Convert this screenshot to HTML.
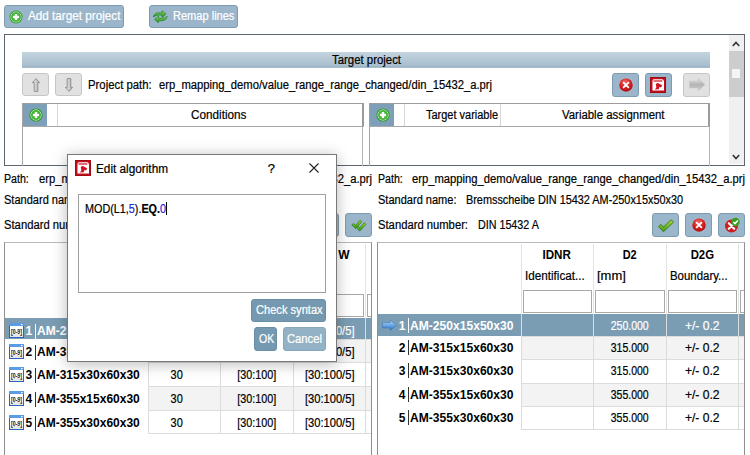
<!DOCTYPE html>
<html><head><meta charset="utf-8"><style>
*{margin:0;padding:0;box-sizing:border-box}
html,body{width:750px;height:455px;overflow:hidden;background:#fff}
body{position:relative;font-family:"Liberation Sans",sans-serif;font-size:12px;color:#000}
.a{position:absolute}
.t{position:absolute;white-space:nowrap;-webkit-text-stroke:0.2px currentColor}
.btn{position:absolute;background:#9db7ca;border:1px solid #7d9bb1;border-radius:3px}
.gbtn{position:absolute;background:#e1e1e1;border:1px solid #c6c6c6;border-radius:3px}
</style></head><body>
<div class="btn" style="left:4px;top:5px;width:120px;height:23px;background:#9bb6ca;border-color:#7d9bb1"></div>
<svg class="a" style="left:7.5px;top:8.5px" width="16" height="16" viewBox="0 0 16 16"><circle cx="8" cy="8" r="6.5" fill="#2e9a2e"/><circle cx="8" cy="8" r="5.1" fill="none" stroke="#b6e8a8" stroke-width="1"/><circle cx="8" cy="8" r="4.6" fill="#46b43a"/><rect x="6.8" y="4.9" width="2.4" height="6.2" fill="#fff"/><rect x="4.9" y="6.8" width="6.2" height="2.4" fill="#fff"/></svg>
<div class="t" style="font-size:12px;line-height:13px;color:#fff;left:27.50px;top:10.34px;transform:scaleX(0.9764);transform-origin:0 0;">Add target project</div>
<div class="btn" style="left:149px;top:5px;width:89px;height:23px;background:#9bb6ca;border-color:#7d9bb1"></div>
<svg class="a" style="left:152px;top:10px" width="16" height="13" viewBox="0 0 16 13"><defs><linearGradient id="rf" x1="0" y1="0" x2="0" y2="1"><stop offset="0" stop-color="#9adc78"/><stop offset="0.55" stop-color="#4cb13a"/><stop offset="1" stop-color="#23801c"/></linearGradient></defs><path d="M1.3 7 C2 3 5.5 2.3 10 2.8 L10 0.6 L14 4 L10 7.4 L10 5.2 C6.5 4.8 4 5.2 1.3 7 Z" fill="url(#rf)" stroke="#1f7a1f" stroke-width="0.6"/><path d="M15.2 6.4 C14.5 10.4 11 11.2 6.5 10.6 L6.5 12.8 L2.5 9.4 L6.5 6 L6.5 8.2 C10 8.6 12.5 8.2 15.2 6.4 Z" fill="url(#rf)" stroke="#1f7a1f" stroke-width="0.6"/></svg>
<div class="t" style="font-size:12px;line-height:13px;color:#fff;left:172.50px;top:10.34px;transform:scaleX(0.9205);transform-origin:0 0;">Remap lines</div>
<div class="a" style="left:4px;top:34px;width:741px;height:132px;border:1px solid #5c6670"></div>
<div class="a" style="left:22px;top:52px;width:688px;height:16px;background:linear-gradient(#c3d4de,#a8becd 88%,#8fa9bb 94%,#c0d0da)"></div>
<div class="t" style="font-size:12px;line-height:13px;left:331.70px;top:54.34px;transform:scaleX(0.9491);transform-origin:0 0;">Target project</div>
<div class="gbtn" style="left:22px;top:73px;width:27px;height:23px"></div>
<div class="gbtn" style="left:55px;top:73px;width:27px;height:23px"></div>
<svg class="a" style="left:32px;top:78px" width="8" height="14" viewBox="0 0 8 14"><defs><linearGradient id="ua" x1="0" y1="0" x2="1" y2="0"><stop offset="0" stop-color="#f2f2f2"/><stop offset="1" stop-color="#a8a8a8"/></linearGradient></defs><path d="M4 0.6 L7.6 4.6 H5.8 V13.4 H2.2 V4.6 H0.4 Z" fill="url(#ua)" stroke="#8a8a8a" stroke-width="0.9" stroke-linejoin="round"/></svg>
<svg class="a" style="left:65px;top:78px" width="8" height="14" viewBox="0 0 8 14"><defs><linearGradient id="da" x1="0" y1="0" x2="1" y2="0"><stop offset="0" stop-color="#f2f2f2"/><stop offset="1" stop-color="#a8a8a8"/></linearGradient></defs><path d="M4 13.4 L7.6 9.4 H5.8 V0.6 H2.2 V9.4 H0.4 Z" fill="url(#da)" stroke="#8a8a8a" stroke-width="0.9" stroke-linejoin="round"/></svg>
<div class="t" style="font-size:12px;line-height:13px;left:88.20px;top:79.34px;transform:scaleX(0.9455);transform-origin:0 0;">Project path:</div>
<div class="t" style="font-size:12px;line-height:13px;left:158.60px;top:79.34px;transform:scaleX(0.9364);transform-origin:0 0;">erp_mapping_demo/value_range_range_changed/din_15432_a.prj</div>
<div class="btn" style="left:612px;top:73px;width:27px;height:24px;background:#9bb6ca;border-color:#7d9bb1"></div>
<svg class="a" style="left:617.5px;top:76.5px" width="16" height="16" viewBox="0 0 16 16"><defs><radialGradient id="rg" cx="0.45" cy="0.3" r="0.75"><stop offset="0" stop-color="#f36a6a"/><stop offset="0.55" stop-color="#d42020"/><stop offset="1" stop-color="#a50d0d"/></radialGradient></defs><circle cx="8" cy="8" r="7.3999999999999995" fill="#9fd8ee" opacity="0.7"/><circle cx="8" cy="8" r="6.8" fill="url(#rg)"/><path d="M5.6 5.6 L10.4 10.4 M10.4 5.6 L5.6 10.4" stroke="#fff" stroke-width="1.8" stroke-linecap="round"/></svg>
<div class="btn" style="left:645px;top:73px;width:27px;height:24px;background:#9bb6ca;border-color:#7d9bb1"></div>
<svg class="a" style="left:650px;top:77px" width="16" height="16" viewBox="0 0 16 16"><rect x="0" y="0" width="16" height="16" fill="#c40f1c"/><rect x="0.5" y="0.5" width="15" height="15" fill="none" stroke="#a00812" stroke-width="1"/><path d="M4 2.3 H12.5 L14 3.8 V13.6 H2.5 V3.8 Q2.5 2.3 4 2.3 Z" fill="#fff"/><rect x="3.5" y="3.4" width="8.8" height="1.2" fill="#d01020"/><path d="M5.8 7.2 Q7.5 5.2 9.2 6.8 L12.2 8.2 L11 10.6 L9.4 10 L8.8 12.2 L5 12.4 L6.4 10.2 Z" fill="#d01222"/></svg>
<div class="gbtn" style="left:683px;top:73px;width:27px;height:24px"></div>
<svg class="a" style="left:689px;top:78px" width="17" height="14" viewBox="0 0 17 14"><defs><linearGradient id="ga" x1="0" y1="0" x2="0" y2="1"><stop offset="0" stop-color="#e2e2e2"/><stop offset="0.5" stop-color="#b4b4b4"/><stop offset="1" stop-color="#cfcfcf"/></linearGradient></defs><path d="M0.5 3.2 H9.2 V0.3 L16 6.6 L9.2 13 V10 H0.5 Z" fill="url(#ga)" stroke="#c4c4c4" stroke-width="0.5"/></svg>
<div class="a" style="left:22px;top:103px;width:342px;height:1px;background:#9c9c9c"></div>
<div class="a" style="left:22px;top:103px;width:1px;height:63px;background:#a4a4a4"></div>
<div class="a" style="left:362px;top:103px;width:2px;height:24px;background:#9a9a9a"></div>
<div class="a" style="left:362px;top:126px;width:1px;height:40px;background:#b4b4b4"></div>
<div class="a" style="left:22px;top:126px;width:342px;height:1px;background:#a8a8a8"></div>
<div class="a" style="left:23px;top:104px;width:24px;height:22px;background:#7d9fb8"></div>
<svg class="a" style="left:27.799999999999997px;top:107px" width="16" height="16" viewBox="0 0 16 16"><circle cx="8" cy="8" r="6.6" fill="#2e9a2e"/><circle cx="8" cy="8" r="5.199999999999999" fill="none" stroke="#b6e8a8" stroke-width="1"/><circle cx="8" cy="8" r="4.699999999999999" fill="#46b43a"/><rect x="6.8" y="4.9" width="2.4" height="6.2" fill="#fff"/><rect x="4.9" y="6.8" width="6.2" height="2.4" fill="#fff"/></svg>
<div class="a" style="left:57px;top:104px;width:1px;height:22px;background:#d6d6d6"></div>
<div class="t" style="font-size:12px;line-height:13px;left:190.90px;top:108.74px;transform:scaleX(0.9770);transform-origin:0 0;">Conditions</div>
<div class="a" style="left:369px;top:103px;width:341px;height:1px;background:#9c9c9c"></div>
<div class="a" style="left:369px;top:103px;width:1px;height:63px;background:#a4a4a4"></div>
<div class="a" style="left:708px;top:103px;width:2px;height:24px;background:#9a9a9a"></div>
<div class="a" style="left:709px;top:126px;width:1px;height:40px;background:#b4b4b4"></div>
<div class="a" style="left:369px;top:126px;width:341px;height:1px;background:#a8a8a8"></div>
<div class="a" style="left:370px;top:104px;width:24px;height:22px;background:#7d9fb8"></div>
<svg class="a" style="left:374.8px;top:107px" width="16" height="16" viewBox="0 0 16 16"><circle cx="8" cy="8" r="6.6" fill="#2e9a2e"/><circle cx="8" cy="8" r="5.199999999999999" fill="none" stroke="#b6e8a8" stroke-width="1"/><circle cx="8" cy="8" r="4.699999999999999" fill="#46b43a"/><rect x="6.8" y="4.9" width="2.4" height="6.2" fill="#fff"/><rect x="4.9" y="6.8" width="6.2" height="2.4" fill="#fff"/></svg>
<div class="a" style="left:404px;top:104px;width:1px;height:22px;background:#d6d6d6"></div>
<div class="a" style="left:500px;top:104px;width:1px;height:22px;background:#d6d6d6"></div>
<div class="t" style="font-size:12px;line-height:13px;left:426.00px;top:108.74px;transform:scaleX(0.9146);transform-origin:0 0;">Target variable</div>
<div class="t" style="font-size:12px;line-height:13px;left:562.00px;top:108.74px;transform:scaleX(0.9504);transform-origin:0 0;">Variable assignment</div>
<div class="a" style="left:729px;top:35px;width:15px;height:129px;background:#f0f0f0"></div>
<div class="a" style="left:729px;top:51px;width:15px;height:46px;background:#cdcdcd"></div>
<div class="a" style="left:732px;top:69px;width:8px;height:9px;background:#f4f4f4"></div>
<svg class="a" style="left:732px;top:41px" width="8" height="6" viewBox="0 0 8 6"><path d="M0.8 5 L4 1.5 L7.2 5" fill="none" stroke="#333" stroke-width="1.6"/></svg>
<svg class="a" style="left:732px;top:154px" width="8" height="6" viewBox="0 0 8 6"><path d="M0.8 1 L4 4.5 L7.2 1" fill="none" stroke="#333" stroke-width="1.6"/></svg>
<div class="t" style="font-size:12px;line-height:13px;left:4.40px;top:172.94px;transform:scaleX(0.8847);transform-origin:0 0;">Path:</div>
<div class="t" style="font-size:12px;line-height:13px;left:39.00px;top:172.94px;transform:scaleX(0.9364);transform-origin:0 0;">erp_mapping_demo/value_range_range_changed/din_15432_a.prj</div>
<div class="t" style="font-size:12px;line-height:13px;left:4.40px;top:194.34px;transform:scaleX(0.9193);transform-origin:0 0;">Standard name:</div>
<div class="t" style="font-size:12px;line-height:13px;left:4.40px;top:218.84px;transform:scaleX(0.9369);transform-origin:0 0;">Standard number:</div>
<div class="btn" style="left:312px;top:213px;width:27px;height:24px;background:#9bb6ca;border-color:#7d9bb1"></div>
<div class="btn" style="left:345px;top:213px;width:27px;height:24px;background:#9bb6ca;border-color:#7d9bb1"></div>
<svg class="a" style="left:351px;top:218px" width="16" height="14" viewBox="0 0 16 14"><defs><linearGradient id="dk" x1="0" y1="0" x2="0" y2="1"><stop offset="0" stop-color="#a8d436"/><stop offset="1" stop-color="#2f9418"/></linearGradient></defs><path d="M0.8 7 L2.6 5.4 L4.6 7.4 L9 2.2 L10.8 3.8 L4.6 10.6 Z" fill="url(#dk)" stroke="#267a12" stroke-width="0.7"/><path d="M5 9.5 L6.8 7.9 L8.8 9.9 L13.2 4.7 L15 6.3 L8.8 13.1 Z" fill="url(#dk)" stroke="#267a12" stroke-width="0.7"/></svg>
<div class="t" style="font-size:12px;line-height:13px;left:377.60px;top:172.94px;transform:scaleX(0.8847);transform-origin:0 0;">Path:</div>
<div class="t" style="font-size:12px;line-height:13px;left:411.80px;top:172.94px;transform:scaleX(0.9364);transform-origin:0 0;">erp_mapping_demo/value_range_range_changed/din_15432_a.prj</div>
<div class="t" style="font-size:12px;line-height:13px;left:377.60px;top:194.34px;transform:scaleX(0.9193);transform-origin:0 0;">Standard name:</div>
<div class="t" style="font-size:12px;line-height:13px;left:466.00px;top:194.34px;transform:scaleX(0.9062);transform-origin:0 0;">Bremsscheibe DIN 15432 AM-250x15x50x30</div>
<div class="t" style="font-size:12px;line-height:13px;left:377.60px;top:218.84px;transform:scaleX(0.9369);transform-origin:0 0;">Standard number:</div>
<div class="t" style="font-size:12px;line-height:13px;left:477.70px;top:218.84px;transform:scaleX(0.8935);transform-origin:0 0;">DIN 15432 A</div>
<div class="btn" style="left:652px;top:213px;width:27px;height:24px;background:#9bb6ca;border-color:#7d9bb1"></div>
<svg class="a" style="left:658px;top:219px" width="16" height="14" viewBox="0 0 16 14"><defs><linearGradient id="ck" x1="0" y1="0" x2="0" y2="1"><stop offset="0" stop-color="#b6d836"/><stop offset="1" stop-color="#3a9a1a"/></linearGradient></defs><path d="M0.6 7.6 L3 5.4 L5.4 8 L13.2 0.8 L15.4 3.2 L5.4 12.8 Z" fill="url(#ck)" stroke="#2a7a12" stroke-width="0.9" stroke-linejoin="round"/></svg>
<div class="btn" style="left:685px;top:213px;width:27px;height:24px;background:#9bb6ca;border-color:#7d9bb1"></div>
<svg class="a" style="left:690.5px;top:217px" width="16" height="16" viewBox="0 0 16 16"><defs><radialGradient id="rg" cx="0.45" cy="0.3" r="0.75"><stop offset="0" stop-color="#f36a6a"/><stop offset="0.55" stop-color="#d42020"/><stop offset="1" stop-color="#a50d0d"/></radialGradient></defs><circle cx="8" cy="8" r="7.3999999999999995" fill="#9fd8ee" opacity="0.7"/><circle cx="8" cy="8" r="6.8" fill="url(#rg)"/><path d="M5.6 5.6 L10.4 10.4 M10.4 5.6 L5.6 10.4" stroke="#fff" stroke-width="1.8" stroke-linecap="round"/></svg>
<div class="btn" style="left:718px;top:213px;width:27px;height:24px;background:#9bb6ca;border-color:#7d9bb1"></div>
<svg class="a" style="left:724px;top:216.5px" width="16" height="16" viewBox="0 0 16 16"><circle cx="7.5" cy="9" r="6.5" fill="#cc1f1f"/><path d="M4.8 6.3 L10.2 11.7 M10.2 6.3 L4.8 11.7" stroke="#fff" stroke-width="2.2" stroke-linecap="round"/><circle cx="11.5" cy="5" r="4.2" fill="#3a9e22"/><path d="M9.3 5 L11 6.6 L13.8 3.6" stroke="#fff" stroke-width="1.5" fill="none"/></svg>
<div class="a" style="left:377px;top:242px;width:368px;height:213px;border:1px solid #8f8f8f;border-top-color:#b9b9b9;border-bottom:none"></div>
<div class="a" style="left:521px;top:244px;width:1px;height:70px;background:#e3e3e3"></div>
<div class="a" style="left:593px;top:244px;width:1px;height:70px;background:#e3e3e3"></div>
<div class="a" style="left:666px;top:244px;width:1px;height:70px;background:#e3e3e3"></div>
<div class="a" style="left:738px;top:244px;width:1px;height:70px;background:#e3e3e3"></div>
<div class="t" style="font-size:12px;line-height:13px;font-weight:bold;-webkit-text-stroke:0;left:542.33px;top:249.34px;transform:scaleX(0.9678);transform-origin:50% 0;">IDNR</div>
<div class="t" style="font-size:12px;line-height:13px;left:525.00px;top:270.34px;transform:scaleX(0.9743);transform-origin:0 0;">Identificat...</div>
<div class="a" style="left:523px;top:290px;width:69px;height:23px;border:1px solid #a8a8a8;background:#fff"></div>
<div class="t" style="font-size:12px;line-height:13px;font-weight:bold;-webkit-text-stroke:0;left:621.83px;top:249.34px;transform:scaleX(0.9124);transform-origin:50% 0;">D2</div>
<div class="t" style="font-size:12px;line-height:13px;left:597.00px;top:270.34px;transform:scaleX(1.0798);transform-origin:0 0;">[mm]</div>
<div class="a" style="left:595px;top:290px;width:70px;height:23px;border:1px solid #a8a8a8;background:#fff"></div>
<div class="t" style="font-size:12px;line-height:13px;font-weight:bold;-webkit-text-stroke:0;left:689.66px;top:249.34px;transform:scaleX(0.9478);transform-origin:50% 0;">D2G</div>
<div class="t" style="font-size:12px;line-height:13px;left:670.00px;top:270.34px;transform:scaleX(0.9523);transform-origin:0 0;">Boundary...</div>
<div class="a" style="left:668px;top:290px;width:69px;height:23px;border:1px solid #a8a8a8;background:#fff"></div>
<div class="a" style="left:740px;top:290px;width:4px;height:23px;border:1px solid #a8a8a8;border-right:none"></div>
<div class="a" style="left:378px;top:314px;width:366px;height:22px;background:#7b9db3"></div>
<div class="t" style="font-size:12px;line-height:13px;font-weight:bold;-webkit-text-stroke:0;color:#fff;left:398.71px;top:319.84px;">1</div>
<div class="a" style="left:408px;top:318px;width:1px;height:15px;background:#fff"></div>
<div class="t" style="font-size:12px;line-height:13px;font-weight:bold;-webkit-text-stroke:0;color:#fff;left:410.20px;top:319.84px;transform:scaleX(1.0073);transform-origin:0 0;">AM-250x15x50x30</div>
<div class="t" style="font-size:12px;line-height:13px;color:#fff;left:608.30px;top:319.84px;transform:scaleX(0.8758);transform-origin:50% 0;">250.000</div>
<div class="t" style="font-size:12px;line-height:13px;color:#fff;left:685.32px;top:319.84px;transform:scaleX(1.0070);transform-origin:50% 0;">+/- 0.2</div>
<div class="a" style="left:521px;top:336px;width:223px;height:23px;background:#f3f3f3"></div>
<div class="t" style="font-size:12px;line-height:13px;font-weight:bold;-webkit-text-stroke:0;left:398.71px;top:341.84px;">2</div>
<div class="a" style="left:408px;top:340px;width:1px;height:15px;background:#333"></div>
<div class="t" style="font-size:12px;line-height:13px;font-weight:bold;-webkit-text-stroke:0;left:410.20px;top:341.84px;transform:scaleX(1.0073);transform-origin:0 0;">AM-315x15x60x30</div>
<div class="t" style="font-size:12px;line-height:13px;left:608.30px;top:341.84px;transform:scaleX(0.8758);transform-origin:50% 0;">315.000</div>
<div class="t" style="font-size:12px;line-height:13px;left:685.32px;top:341.84px;transform:scaleX(1.0070);transform-origin:50% 0;">+/- 0.2</div>
<div class="a" style="left:521px;top:359px;width:223px;height:24px;background:#fff"></div>
<div class="t" style="font-size:12px;line-height:13px;font-weight:bold;-webkit-text-stroke:0;left:398.71px;top:364.84px;">3</div>
<div class="a" style="left:408px;top:363px;width:1px;height:15px;background:#333"></div>
<div class="t" style="font-size:12px;line-height:13px;font-weight:bold;-webkit-text-stroke:0;left:410.20px;top:364.84px;transform:scaleX(1.0073);transform-origin:0 0;">AM-315x30x60x30</div>
<div class="t" style="font-size:12px;line-height:13px;left:608.30px;top:364.84px;transform:scaleX(0.8758);transform-origin:50% 0;">315.000</div>
<div class="t" style="font-size:12px;line-height:13px;left:685.32px;top:364.84px;transform:scaleX(1.0070);transform-origin:50% 0;">+/- 0.2</div>
<div class="a" style="left:521px;top:383px;width:223px;height:23px;background:#f3f3f3"></div>
<div class="t" style="font-size:12px;line-height:13px;font-weight:bold;-webkit-text-stroke:0;left:398.71px;top:388.84px;">4</div>
<div class="a" style="left:408px;top:387px;width:1px;height:15px;background:#333"></div>
<div class="t" style="font-size:12px;line-height:13px;font-weight:bold;-webkit-text-stroke:0;left:410.20px;top:388.84px;transform:scaleX(1.0073);transform-origin:0 0;">AM-355x15x60x30</div>
<div class="t" style="font-size:12px;line-height:13px;left:608.30px;top:388.84px;transform:scaleX(0.8758);transform-origin:50% 0;">355.000</div>
<div class="t" style="font-size:12px;line-height:13px;left:685.32px;top:388.84px;transform:scaleX(1.0070);transform-origin:50% 0;">+/- 0.2</div>
<div class="a" style="left:521px;top:406px;width:223px;height:23px;background:#fff"></div>
<div class="t" style="font-size:12px;line-height:13px;font-weight:bold;-webkit-text-stroke:0;left:398.71px;top:411.84px;">5</div>
<div class="a" style="left:408px;top:410px;width:1px;height:15px;background:#333"></div>
<div class="t" style="font-size:12px;line-height:13px;font-weight:bold;-webkit-text-stroke:0;left:410.20px;top:411.84px;transform:scaleX(1.0073);transform-origin:0 0;">AM-355x30x60x30</div>
<div class="t" style="font-size:12px;line-height:13px;left:608.30px;top:411.84px;transform:scaleX(0.8758);transform-origin:50% 0;">355.000</div>
<div class="t" style="font-size:12px;line-height:13px;left:685.32px;top:411.84px;transform:scaleX(1.0070);transform-origin:50% 0;">+/- 0.2</div>
<div class="a" style="left:521px;top:336px;width:223px;height:1px;background:#dcdcdc"></div>
<div class="a" style="left:521px;top:359px;width:223px;height:1px;background:#dcdcdc"></div>
<div class="a" style="left:521px;top:383px;width:223px;height:1px;background:#dcdcdc"></div>
<div class="a" style="left:521px;top:406px;width:223px;height:1px;background:#dcdcdc"></div>
<div class="a" style="left:521px;top:429px;width:223px;height:1px;background:#dcdcdc"></div>
<div class="a" style="left:521px;top:314px;width:1px;height:116px;background:#dcdcdc"></div>
<div class="a" style="left:593px;top:314px;width:1px;height:116px;background:#dcdcdc"></div>
<div class="a" style="left:666px;top:314px;width:1px;height:116px;background:#dcdcdc"></div>
<div class="a" style="left:738px;top:314px;width:1px;height:116px;background:#dcdcdc"></div>
<svg class="a" style="left:382px;top:320px" width="15" height="11" viewBox="0 0 15 11"><defs><linearGradient id="ba" x1="0" y1="0" x2="0" y2="1"><stop offset="0" stop-color="#b4dcf6"/><stop offset="0.5" stop-color="#6aa6e0"/><stop offset="1" stop-color="#2f6cc0"/></linearGradient></defs><path d="M0.5 2.6 H8.2 V0.3 L14.6 5.3 L8.2 10.4 V8 H0.5 Z" fill="url(#ba)" stroke="#3a6fb0" stroke-width="0.5"/></svg>
<div class="a" style="left:4px;top:242px;width:368px;height:213px;border:1px solid #8f8f8f;border-top-color:#b9b9b9;border-bottom:none"></div>
<div class="a" style="left:148px;top:244px;width:1px;height:74px;background:#e3e3e3"></div>
<div class="a" style="left:220px;top:244px;width:1px;height:74px;background:#e3e3e3"></div>
<div class="a" style="left:293px;top:244px;width:1px;height:74px;background:#e3e3e3"></div>
<div class="a" style="left:365px;top:244px;width:1px;height:74px;background:#e3e3e3"></div>
<div class="t" style="font-size:12px;line-height:13px;font-weight:bold;-webkit-text-stroke:0;left:338.30px;top:249.04px;">W</div>
<div class="a" style="left:150px;top:294px;width:69px;height:23px;border:1px solid #a8a8a8;background:#fff"></div>
<div class="a" style="left:222px;top:294px;width:70px;height:23px;border:1px solid #a8a8a8;background:#fff"></div>
<div class="a" style="left:295px;top:294px;width:69px;height:23px;border:1px solid #a8a8a8;background:#fff"></div>
<div class="a" style="left:367px;top:294px;width:4px;height:23px;border:1px solid #a8a8a8;border-right:none"></div>
<div class="a" style="left:5px;top:318px;width:366px;height:21px;background:#7b9db3"></div>
<svg class="a" style="left:9px;top:323px" width="15" height="15" viewBox="0 0 15 15"><rect x="0" y="0" width="15" height="15" fill="#2a64c0"/><rect x="0" y="0" width="15" height="3" fill="#5a9ae6"/><rect x="1" y="3" width="13" height="11" fill="#fff"/><rect x="1" y="11" width="13" height="3" fill="#e6e6e6"/><rect x="12" y="1" width="1.5" height="1.2" fill="#fff"/><text x="7.5" y="11.2" font-family="Liberation Sans" font-weight="bold" font-size="7" text-anchor="middle" fill="#111" textLength="11" lengthAdjust="spacingAndGlyphs">[0-9]</text></svg>
<div class="t" style="font-size:12px;line-height:13px;font-weight:bold;-webkit-text-stroke:0;color:#fff;left:25.61px;top:325.34px;">1</div>
<div class="a" style="left:35px;top:324px;width:1px;height:15px;background:#fff"></div>
<div class="t" style="font-size:12px;line-height:13px;font-weight:bold;-webkit-text-stroke:0;color:#fff;left:37.00px;top:325.34px;">AM-250x15x50x30</div>
<div class="t" style="font-size:12px;line-height:13px;color:#fff;left:170.32px;top:325.34px;transform:scaleX(0.9132);transform-origin:50% 0;">30</div>
<div class="t" style="font-size:12px;line-height:13px;color:#fff;left:234.81px;top:325.34px;transform:scaleX(0.8991);transform-origin:50% 0;">[30:100]</div>
<div class="t" style="font-size:12px;line-height:13px;color:#fff;left:302.90px;top:325.34px;transform:scaleX(0.9290);transform-origin:50% 0;">[30:100/5]</div>
<div class="a" style="left:148px;top:339px;width:223px;height:23px;background:#f3f3f3"></div>
<svg class="a" style="left:9px;top:344px" width="15" height="15" viewBox="0 0 15 15"><rect x="0" y="0" width="15" height="15" fill="#2a64c0"/><rect x="0" y="0" width="15" height="3" fill="#5a9ae6"/><rect x="1" y="3" width="13" height="11" fill="#fff"/><rect x="1" y="11" width="13" height="3" fill="#e6e6e6"/><rect x="12" y="1" width="1.5" height="1.2" fill="#fff"/><text x="7.5" y="11.2" font-family="Liberation Sans" font-weight="bold" font-size="7" text-anchor="middle" fill="#111" textLength="11" lengthAdjust="spacingAndGlyphs">[0-9]</text></svg>
<div class="t" style="font-size:12px;line-height:13px;font-weight:bold;-webkit-text-stroke:0;left:25.61px;top:346.34px;">2</div>
<div class="a" style="left:35px;top:345px;width:1px;height:15px;background:#333"></div>
<div class="t" style="font-size:12px;line-height:13px;font-weight:bold;-webkit-text-stroke:0;left:37.00px;top:346.34px;">AM-315x15x60x30</div>
<div class="t" style="font-size:12px;line-height:13px;left:170.32px;top:346.34px;transform:scaleX(0.9132);transform-origin:50% 0;">30</div>
<div class="t" style="font-size:12px;line-height:13px;left:234.81px;top:346.34px;transform:scaleX(0.8991);transform-origin:50% 0;">[30:100]</div>
<div class="t" style="font-size:12px;line-height:13px;left:302.90px;top:346.34px;transform:scaleX(0.9290);transform-origin:50% 0;">[30:100/5]</div>
<div class="a" style="left:148px;top:362px;width:223px;height:24px;background:#fff"></div>
<svg class="a" style="left:9px;top:367px" width="15" height="15" viewBox="0 0 15 15"><rect x="0" y="0" width="15" height="15" fill="#2a64c0"/><rect x="0" y="0" width="15" height="3" fill="#5a9ae6"/><rect x="1" y="3" width="13" height="11" fill="#fff"/><rect x="1" y="11" width="13" height="3" fill="#e6e6e6"/><rect x="12" y="1" width="1.5" height="1.2" fill="#fff"/><text x="7.5" y="11.2" font-family="Liberation Sans" font-weight="bold" font-size="7" text-anchor="middle" fill="#111" textLength="11" lengthAdjust="spacingAndGlyphs">[0-9]</text></svg>
<div class="t" style="font-size:12px;line-height:13px;font-weight:bold;-webkit-text-stroke:0;left:25.61px;top:369.34px;">3</div>
<div class="a" style="left:35px;top:368px;width:1px;height:15px;background:#333"></div>
<div class="t" style="font-size:12px;line-height:13px;font-weight:bold;-webkit-text-stroke:0;left:37.00px;top:369.34px;">AM-315x30x60x30</div>
<div class="t" style="font-size:12px;line-height:13px;left:170.32px;top:369.34px;transform:scaleX(0.9132);transform-origin:50% 0;">30</div>
<div class="t" style="font-size:12px;line-height:13px;left:234.81px;top:369.34px;transform:scaleX(0.8991);transform-origin:50% 0;">[30:100]</div>
<div class="t" style="font-size:12px;line-height:13px;left:302.90px;top:369.34px;transform:scaleX(0.9290);transform-origin:50% 0;">[30:100/5]</div>
<div class="a" style="left:148px;top:386px;width:223px;height:24px;background:#f3f3f3"></div>
<svg class="a" style="left:9px;top:391px" width="15" height="15" viewBox="0 0 15 15"><rect x="0" y="0" width="15" height="15" fill="#2a64c0"/><rect x="0" y="0" width="15" height="3" fill="#5a9ae6"/><rect x="1" y="3" width="13" height="11" fill="#fff"/><rect x="1" y="11" width="13" height="3" fill="#e6e6e6"/><rect x="12" y="1" width="1.5" height="1.2" fill="#fff"/><text x="7.5" y="11.2" font-family="Liberation Sans" font-weight="bold" font-size="7" text-anchor="middle" fill="#111" textLength="11" lengthAdjust="spacingAndGlyphs">[0-9]</text></svg>
<div class="t" style="font-size:12px;line-height:13px;font-weight:bold;-webkit-text-stroke:0;left:25.61px;top:393.34px;">4</div>
<div class="a" style="left:35px;top:392px;width:1px;height:15px;background:#333"></div>
<div class="t" style="font-size:12px;line-height:13px;font-weight:bold;-webkit-text-stroke:0;left:37.00px;top:393.34px;">AM-355x15x60x30</div>
<div class="t" style="font-size:12px;line-height:13px;left:170.32px;top:393.34px;transform:scaleX(0.9132);transform-origin:50% 0;">30</div>
<div class="t" style="font-size:12px;line-height:13px;left:234.81px;top:393.34px;transform:scaleX(0.8991);transform-origin:50% 0;">[30:100]</div>
<div class="t" style="font-size:12px;line-height:13px;left:302.90px;top:393.34px;transform:scaleX(0.9290);transform-origin:50% 0;">[30:100/5]</div>
<div class="a" style="left:148px;top:410px;width:223px;height:23px;background:#fff"></div>
<svg class="a" style="left:9px;top:415px" width="15" height="15" viewBox="0 0 15 15"><rect x="0" y="0" width="15" height="15" fill="#2a64c0"/><rect x="0" y="0" width="15" height="3" fill="#5a9ae6"/><rect x="1" y="3" width="13" height="11" fill="#fff"/><rect x="1" y="11" width="13" height="3" fill="#e6e6e6"/><rect x="12" y="1" width="1.5" height="1.2" fill="#fff"/><text x="7.5" y="11.2" font-family="Liberation Sans" font-weight="bold" font-size="7" text-anchor="middle" fill="#111" textLength="11" lengthAdjust="spacingAndGlyphs">[0-9]</text></svg>
<div class="t" style="font-size:12px;line-height:13px;font-weight:bold;-webkit-text-stroke:0;left:25.61px;top:417.34px;">5</div>
<div class="a" style="left:35px;top:416px;width:1px;height:15px;background:#333"></div>
<div class="t" style="font-size:12px;line-height:13px;font-weight:bold;-webkit-text-stroke:0;left:37.00px;top:417.34px;">AM-355x30x60x30</div>
<div class="t" style="font-size:12px;line-height:13px;left:170.32px;top:417.34px;transform:scaleX(0.9132);transform-origin:50% 0;">30</div>
<div class="t" style="font-size:12px;line-height:13px;left:234.81px;top:417.34px;transform:scaleX(0.8991);transform-origin:50% 0;">[30:100]</div>
<div class="t" style="font-size:12px;line-height:13px;left:302.90px;top:417.34px;transform:scaleX(0.9290);transform-origin:50% 0;">[30:100/5]</div>
<div class="a" style="left:148px;top:339px;width:223px;height:1px;background:#dcdcdc"></div>
<div class="a" style="left:148px;top:362px;width:223px;height:1px;background:#dcdcdc"></div>
<div class="a" style="left:148px;top:386px;width:223px;height:1px;background:#dcdcdc"></div>
<div class="a" style="left:148px;top:410px;width:223px;height:1px;background:#dcdcdc"></div>
<div class="a" style="left:148px;top:433px;width:223px;height:1px;background:#dcdcdc"></div>
<div class="a" style="left:148px;top:318px;width:1px;height:115px;background:#dcdcdc"></div>
<div class="a" style="left:220px;top:318px;width:1px;height:115px;background:#dcdcdc"></div>
<div class="a" style="left:293px;top:318px;width:1px;height:115px;background:#dcdcdc"></div>
<div class="a" style="left:365px;top:318px;width:1px;height:115px;background:#dcdcdc"></div>
<div class="a" style="left:67px;top:154px;width:270px;height:208px;background:#fff;border:1px solid #777;box-shadow:0 2px 14px rgba(0,0,0,0.28)"></div>
<svg class="a" style="left:75px;top:160px" width="16" height="16" viewBox="0 0 16 16"><rect x="0" y="0" width="16" height="16" fill="#c40f1c"/><rect x="0.5" y="0.5" width="15" height="15" fill="none" stroke="#a00812" stroke-width="1"/><path d="M4 2.3 H12.5 L14 3.8 V13.6 H2.5 V3.8 Q2.5 2.3 4 2.3 Z" fill="#fff"/><rect x="3.5" y="3.4" width="8.8" height="1.2" fill="#d01020"/><path d="M5.8 7.2 Q7.5 5.2 9.2 6.8 L12.2 8.2 L11 10.6 L9.4 10 L8.8 12.2 L5 12.4 L6.4 10.2 Z" fill="#d01222"/></svg>
<div class="t" style="font-size:12px;line-height:13px;left:96.00px;top:163.34px;transform:scaleX(0.9813);transform-origin:0 0;">Edit algorithm</div>
<div class="t" style="font-size:13px;line-height:14px;left:267.70px;top:162.20px;">?</div>
<svg class="a" style="left:309px;top:163px" width="10" height="10" viewBox="0 0 10 10"><path d="M0.5 0.5 L9.5 9.5 M9.5 0.5 L0.5 9.5" stroke="#222" stroke-width="1.1"/></svg>
<div class="a" style="left:78px;top:194px;width:248px;height:99px;border:1px solid #a0a0a0"></div>
<div class="t" style="font-size:12px;line-height:13px;left:85.40px;top:203.34px;transform:scaleX(0.8992);transform-origin:0 0;">MOD(L1,<span style="color:#2626d6">5</span>).<b>EQ.</b><span style="color:#2626d6">0</span></div>
<div class="a" style="left:166px;top:202px;width:1px;height:13px;background:#000"></div>
<div class="btn" style="left:251px;top:299px;width:75px;height:23px;background:#7499b0;border-color:#6a8ea5"></div>
<div class="t" style="font-size:12px;line-height:13px;color:#fff;left:255.70px;top:304.34px;transform:scaleX(0.9246);transform-origin:0 0;">Check syntax</div>
<div class="btn" style="left:254px;top:327px;width:23px;height:24px;background:#7499b0;border-color:#6a8ea5"></div>
<div class="t" style="font-size:12px;line-height:13px;color:#fff;left:258.70px;top:333.24px;transform:scaleX(0.8764);transform-origin:0 0;">OK</div>
<div class="btn" style="left:283px;top:327px;width:43px;height:24px;background:#93b2c5;border-color:#86a6ba"></div>
<div class="t" style="font-size:12px;line-height:13px;color:#fff;left:287.30px;top:333.24px;transform:scaleX(0.9368);transform-origin:0 0;">Cancel</div>
</body></html>
